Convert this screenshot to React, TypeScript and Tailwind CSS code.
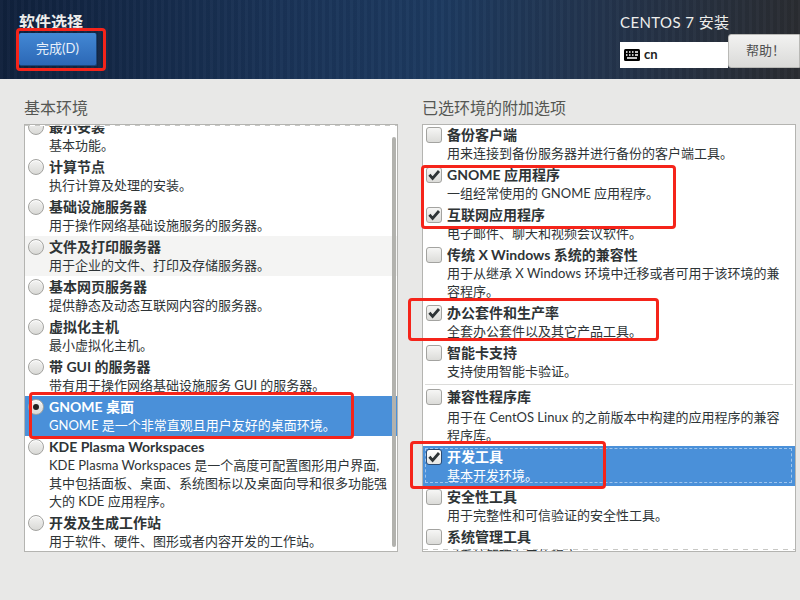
import React from 'react';

type Item = {
  title: string;
  desc: string[];
  selected?: boolean;
  hover?: boolean;
  checked?: boolean;
  loose?: boolean;
};

const envs: Item[] = [
  { title: '最小安装', desc: ['基本功能。'] },
  { title: '计算节点', desc: ['执行计算及处理的安装。'] },
  { title: '基础设施服务器', desc: ['用于操作网络基础设施服务的服务器。'] },
  { title: '文件及打印服务器', desc: ['用于企业的文件、打印及存储服务器。'], hover: true },
  { title: '基本网页服务器', desc: ['提供静态及动态互联网内容的服务器。'] },
  { title: '虚拟化主机', desc: ['最小虚拟化主机。'] },
  { title: '带 GUI 的服务器', desc: ['带有用于操作网络基础设施服务 GUI 的服务器。'] },
  { title: 'GNOME 桌面', desc: ['GNOME 是一个非常直观且用户友好的桌面环境。'], selected: true, checked: true },
  {
    title: 'KDE Plasma Workspaces',
    desc: ['KDE Plasma Workspaces 是一个高度可配置图形用户界面,', '其中包括面板、桌面、系统图标以及桌面向导和很多功能强', '大的 KDE 应用程序。'],
  },
  { title: '开发及生成工作站', desc: ['用于软件、硬件、图形或者内容开发的工作站。'] },
];

const addonsTop: Item[] = [
  { title: '备份客户端', desc: ['用来连接到备份服务器并进行备份的客户端工具。'] },
  { title: 'GNOME 应用程序', desc: ['一组经常使用的 GNOME 应用程序。'], checked: true },
  { title: '互联网应用程序', desc: ['电子邮件、聊天和视频会议软件。'], checked: true },
  { title: '传统 X Windows 系统的兼容性', desc: ['用于从继承 X Windows 环境中迁移或者可用于该环境的兼', '容程序。'] },
  { title: '办公套件和生产率', desc: ['全套办公套件以及其它产品工具。'], checked: true },
  { title: '智能卡支持', desc: ['支持使用智能卡验证。'] },
];

const addonsBottom: Item[] = [
  { title: '兼容性程序库', desc: ['用于在 CentOS Linux 的之前版本中构建的应用程序的兼容', '程序库。'], loose: true },
  { title: '开发工具', desc: ['基本开发环境。'], checked: true, selected: true },
  { title: '安全性工具', desc: ['用于完整性和可信验证的安全性工具。'] },
  { title: '系统管理工具', desc: ['对系统管理有用的程序。'] },
];

const Radio = ({ on }: { on?: boolean }) => (
  <span className="mt-[1px] flex h-[16px] w-[16px] shrink-0 items-center justify-center rounded-full border border-[#a3a3a0] bg-gradient-to-b from-[#f4f4f3] to-[#d9d9d6] shadow-[inset_0_1px_0_#fff]">
    {on && <span className="h-[6px] w-[6px] rounded-full bg-[#222]" />}
  </span>
);

const Check = ({ on, active }: { on?: boolean; active?: boolean }) => (
  <span
    className={`mt-[1px] flex h-[16px] w-[16px] shrink-0 items-center justify-center rounded-[3px] border ${
      active ? 'border-[#2c4a70] bg-gradient-to-b from-white to-[#e6e6e4]' : 'border-[#a3a3a0] bg-gradient-to-b from-[#f6f6f5] to-[#dcdcd9]'
    }`}
  >
    {on && (
      <svg width="14" height="14" viewBox="0 0 14 14">
        <path d="M2.4 6.8 L5.6 10.4 L12 3" fill="none" stroke="#2e3436" strokeWidth="2.8" />
      </svg>
    )}
  </span>
);

const Row = ({ item, kind }: { item: Item; kind: 'radio' | 'check' }) => {
  const bg = item.selected ? 'bg-[#4a90d9] text-white' : item.hover ? 'bg-[#f4f4f3] text-[#2e3436]' : 'text-[#2e3436]';
  return (
    <div className={`relative flex gap-[5px] pt-[2px] pb-[2px] pl-[3px] ${bg}`}>
      {kind === 'radio' ? <Radio on={item.checked} /> : <Check on={item.checked} active={item.selected} />}
      <div className="min-w-0">
        <div className={`whitespace-nowrap text-[14px] leading-[18px] font-bold ${item.loose ? 'mb-[2px]' : ''}`}>{item.title}</div>
        {item.desc.map((line) => (
          <div key={line} className="whitespace-nowrap text-[13px] leading-[18px]">
            {line}
          </div>
        ))}
      </div>
      {item.selected && kind === 'check' && (
        <span className="pointer-events-none absolute top-[2px] right-[3px] bottom-[3px] left-[2px] border border-dashed border-[#9fc4ec]" />
      )}
    </div>
  );
};

const Mark = ({ className }: { className: string }) => (
  <div className={`pointer-events-none absolute rounded-[4px] border-[3px] border-[#f5241a] ${className}`} />
);

const Overshoot = ({ className }: { className: string }) => (
  <div className={`absolute inset-x-0 h-[1px] bg-[repeating-linear-gradient(90deg,#c8c8c5_0px,#c8c8c5_5px,transparent_5px,transparent_10px)] ${className}`} />
);

export default function App() {
  return (
    <div
      className="relative h-[600px] w-[800px] overflow-hidden bg-[#e8e8e7] text-[#2e3436]"
      style={{ fontFamily: 'Lato, "Noto Sans CJK SC", sans-serif' }}
    >
      <header className="flex h-[79px] justify-between bg-[repeating-linear-gradient(90deg,rgba(255,255,255,0.02)_0px,rgba(255,255,255,0.02)_3px,rgba(0,0,0,0.03)_3px,rgba(0,0,0,0.03)_7px),linear-gradient(90deg,#10213c_0%,#1a3357_35%,#1d3a60_55%,#23344d_75%,#2a2c31_100%)]">
        <div className="pl-[19px]">
          <h1 className="pt-[11px] text-[16px] leading-[22px] font-bold text-[#eeeeec]">软件选择</h1>
          <button className="h-[33px] w-[78px] rounded-[2px] border-r border-b border-[#1d4678] bg-gradient-to-b from-[#4388d4] to-[#2c68b6] text-[13px] text-[#e8f0fa]">
            完成(D)
          </button>
        </div>
        <div className="w-[180px]">
          <div className="pt-[11px] pb-[1px] text-[15px] leading-[22px] tracking-[0.4px] text-[#eeeeec]">CENTOS 7 安装</div>
          <div className="flex h-[34px] items-end">
            <div className="flex h-[26px] w-[108px] items-center gap-[4px] bg-white pl-[4px]">
              <svg width="16" height="12" viewBox="0 0 16 12">
                <rect width="16" height="12" rx="1.5" fill="#000" />
                <path d="M2 3h1.5M5 3h1.5M8 3h1.5M11 3h3M2 6h1.5M5 6h1.5M8 6h1.5M11 6h3M3 9h10" stroke="#fff" strokeWidth="1.4" />
              </svg>
              <span className="text-[13px] font-bold text-[#222]">cn</span>
            </div>
            <button className="h-[34px] w-[72px] rounded-l-[3px] border border-[#b9b9b6] bg-gradient-to-b from-[#f2f2f1] to-[#dadad8] pl-[3px] text-[13px] text-[#4f4f4f]">
              帮助！
            </button>
          </div>
        </div>
      </header>

      <main className="flex gap-[24px] pl-[24px]">
        <section className="w-[374px]">
          <h2 className="pt-[18px] pb-[5px] text-[16px] leading-[22px] text-[#555753]">基本环境</h2>
          <div className="relative h-[428px] overflow-hidden border border-[#b4b4b1] bg-white">
            <div className="-mt-[9px]">
              {envs.map((item) => (
                <Row key={item.title} item={item} kind="radio" />
              ))}
            </div>
            <Overshoot className="top-0 bg-white" />
            <div className="absolute top-[12px] right-[1px] h-[410px] w-[4px] rounded-full bg-[#b2b2ae]" />
          </div>
        </section>
        <section className="w-[374px]">
          <h2 className="pt-[18px] pb-[5px] text-[16px] leading-[22px] text-[#555753]">已选环境的附加选项</h2>
          <div className="relative h-[428px] overflow-hidden border border-[#b4b4b1] bg-white">
            <div className="-mt-[1px]">
              {addonsTop.map((item) => (
                <Row key={item.title} item={item} kind="check" />
              ))}
              <div className="mx-[2px] mt-[2px] mb-[1px] border-t border-[#dcdcda]" />
              {addonsBottom.map((item) => (
                <Row key={item.title} item={item} kind="check" />
              ))}
            </div>
            <Overshoot className="bottom-[1px]" />
          </div>
        </section>
      </main>

      <Mark className="top-[28px] left-[16px] h-[43px] w-[90px]" />
      <Mark className="top-[392px] left-[29px] h-[47px] w-[325px]" />
      <Mark className="top-[165px] left-[421px] h-[64px] w-[255px]" />
      <Mark className="top-[298px] left-[408px] h-[43px] w-[251px]" />
      <Mark className="top-[441px] left-[410px] h-[48px] w-[196px]" />
    </div>
  );
}
